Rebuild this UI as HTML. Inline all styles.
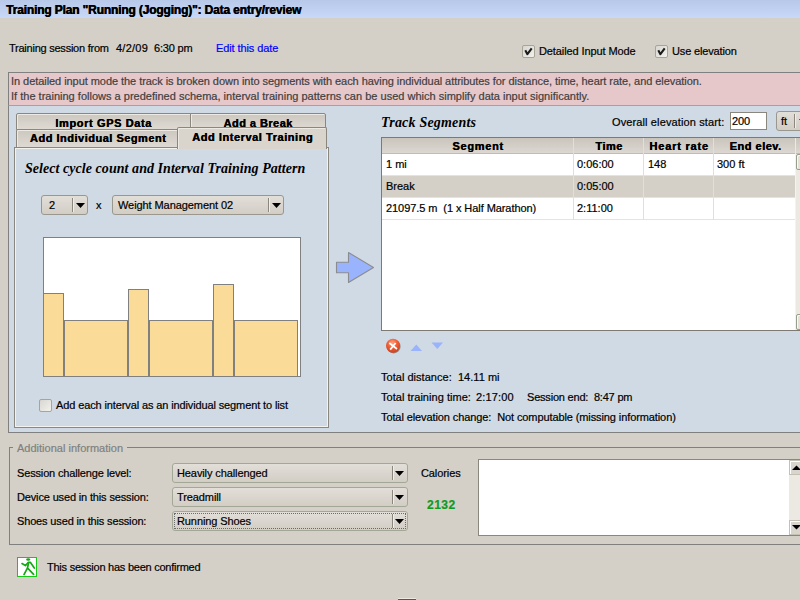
<!DOCTYPE html>
<html><head><meta charset="utf-8">
<style>
*{margin:0;padding:0;box-sizing:border-box}
html,body{width:800px;height:600px;overflow:hidden;background:#d4d0c8;font-family:"Liberation Sans",sans-serif;font-size:11px;color:#000}
.a{position:absolute}
.t{position:absolute;white-space:nowrap;line-height:13px;font-size:11px;letter-spacing:-0.1px;-webkit-text-stroke:0.2px currentColor}
.b{font-weight:bold}
#title{left:0;top:0;width:800px;height:18px;background:linear-gradient(#b8c8e8,#c8d8f8)}
#pink{left:8px;top:72px;width:800px;height:34px;border:1px solid #808080;border-bottom-color:#a2a2a2;border-right:none;background:#e6c8ca}
#blue{left:8px;top:106px;width:800px;height:327px;border-left:1px solid #808080;border-bottom:1px solid #808080;background:#d0dae4}
.cb{position:absolute;width:13px;height:13px;border:1px solid #a8a498;border-radius:2px;background:linear-gradient(135deg,#d8d6d0,#f2f1ec)}
.cb svg{position:absolute;left:0;top:0}

.tab{position:absolute;border:1px solid #8a877f;background:linear-gradient(#ccc8c0,#dedad3);box-shadow:inset 1px 1px 0 #eceae2}
.tab.sel{background:#d9d5cd}
.tl{position:absolute;white-space:nowrap;line-height:13px;font-size:11px;text-align:center;text-shadow:0.45px 0 0 #000}
#panel{left:14px;top:147px;width:315px;height:281px;border:1px solid #8a877f;background:#d0dae4;box-shadow:inset 1px 1px 0 #f4f2ec,inset -1px -1px 0 #f4f2ec}

.combo{position:absolute;border:1px solid #9a978e;border-radius:3px;background:linear-gradient(#e2ded8,#d2cec6)}
.combo .sep{position:absolute;top:2px;width:1px;height:14px;background:#8a877f;box-shadow:1px 0 0 #f0eee8}
.combo .arr{position:absolute}
.bar{position:absolute;border:1px solid #808080;background:#fadc98}

#tbl{left:381px;top:137px;width:430px;height:194px;border:1px solid #7e7a72;background:#fff;overflow:hidden}
#tbl .hdr{position:absolute;left:0;top:0;width:100%;height:16px;background:linear-gradient(#c9c5bd,#dcd8d1);border-bottom:1px solid #c0bcb4}
#tbl .hc{position:absolute;top:2px;height:13px;line-height:13px;text-align:center;font-weight:bold;white-space:nowrap;letter-spacing:0.5px;text-shadow:0.45px 0 0 #000}
#tbl .row{position:absolute;left:0;width:100%;height:22px;border-bottom:1px solid #e6e3dc}
#tbl .vl{position:absolute;top:0;width:1px;height:82px;background:#e2dfd8}
#tbl .c{position:absolute;line-height:13px;white-space:nowrap;letter-spacing:0px;-webkit-text-stroke:0.2px currentColor}
#tbl .sb{position:absolute;left:413px;top:16px;width:17px;height:176px;background:#ebe9e2;border-left:1px solid #f4f3ee}
#tbl .sbb{position:absolute;left:414px;width:17px;height:16px;border:1px solid #94a08c;border-radius:2px;background:linear-gradient(90deg,#e6e3dc,#d4d0c6);box-shadow:inset 1px 1px 0 #f8f8f4}

.combo.g{border-color:#a3a896}
.combo .focus{position:absolute;left:1px;top:1px;right:1px;bottom:1px;border:1px dotted #6a6a6a}
.sbtn{position:absolute;width:15px;height:15px;border:1px solid #c3c0b6;background:#d9d5cd;box-shadow:inset 1px 1px 0 #fff}
.sbtn svg{position:absolute;left:-1px;top:-1px}
</style></head><body>
<div id="title" class="a"></div>
<div class="t b" style="left:6px;top:3px;font-size:12px;line-height:14px;letter-spacing:-0.16px;text-shadow:0.4px 0 0 #000">Training Plan "Running (Jogging)": Data entry/review</div>

<div class="t" style="left:9px;top:42px;letter-spacing:-0.24px">Training session from</div>
<div class="t" style="left:116px;top:42px;letter-spacing:0.25px">4/2/09</div>
<div class="t" style="left:154px;top:42px;letter-spacing:-0.2px">6:30 pm</div>
<div class="t" style="left:216px;top:42px;color:#0000ff">Edit this date</div>

<div class="cb" style="left:522px;top:45px"><svg width="11" height="11" viewBox="0 0 11 11"><path d="M2.3 4.3L4.4 8.2L8.7 2.4" stroke="#1c1c1c" stroke-width="2.1" fill="none" stroke-linejoin="round"/></svg></div>
<div class="t" style="left:539px;top:45px;letter-spacing:-0.1px">Detailed Input Mode</div>
<div class="cb" style="left:655px;top:45px"><svg width="11" height="11" viewBox="0 0 11 11"><path d="M2.3 4.3L4.4 8.2L8.7 2.4" stroke="#1c1c1c" stroke-width="2.1" fill="none" stroke-linejoin="round"/></svg></div>
<div class="t" style="left:672px;top:45px;letter-spacing:-0.15px">Use elevation</div>

<div id="pink" class="a"></div>
<div class="t" style="left:11px;top:75px;color:#404040;letter-spacing:-0.055px">In detailed input mode the track is broken down into segments with each having individual attributes for distance, time, heart rate, and elevation.</div>
<div class="t" style="left:11px;top:90px;color:#404040;letter-spacing:0.01px">If the training follows a predefined schema, interval training patterns can be used which simplify data input significantly.</div>

<div id="blue" class="a"></div>


<!-- tabs -->
<div class="tab" style="left:16px;top:113px;width:175px;height:17px;border-radius:2px 0 0 0"></div>
<div class="tab" style="left:190px;top:113px;width:136px;height:17px;border-radius:0 2px 0 0"></div>
<div class="tl b" style="left:16px;top:117px;width:175px;letter-spacing:0.62px">Import GPS Data</div>
<div class="tl b" style="left:190px;top:117px;width:136px;letter-spacing:0.45px">Add a Break</div>
<div class="tab" style="left:16px;top:129px;width:162px;height:18px;border-bottom:none;border-radius:2px 0 0 0"></div>
<div class="tl b" style="left:17px;top:132px;width:162px;letter-spacing:0.5px">Add Individual Segment</div>
<div id="panel" class="a"></div>
<div class="tab sel" style="left:177px;top:127px;width:150px;height:22px;border-bottom:none;border-radius:2px 2px 0 0"></div>
<div class="tl b" style="left:178px;top:131px;width:149px;letter-spacing:0.55px">Add Interval Training</div>

<!-- left panel content -->
<div class="t" style="left:25px;top:161px;font-family:'Liberation Serif',serif;font-style:italic;font-weight:bold;font-size:14px;-webkit-text-stroke:0;line-height:16px;letter-spacing:0.05px">Select cycle count and Interval Training Pattern</div>
<div class="combo" style="left:41px;top:195px;width:47px;height:20px"><div class="sep" style="left:30px"></div><svg class="arr" style="left:34px;top:7px" width="9" height="5" viewBox="0 0 9 5"><path d="M0 0H9L4.5 5Z" fill="#000"/></svg></div>
<div class="t" style="left:49px;top:199px">2</div>
<div class="t" style="left:96px;top:199px">x</div>
<div class="combo" style="left:112px;top:195px;width:172px;height:20px"><div class="sep" style="left:155px"></div><svg class="arr" style="left:159px;top:7px" width="9" height="5" viewBox="0 0 9 5"><path d="M0 0H9L4.5 5Z" fill="#000"/></svg></div>
<div class="t" style="left:118px;top:199px;letter-spacing:-0.08px">Weight Management 02</div>
<div class="a" style="left:43px;top:237px;width:258px;height:140px;border:1px solid #808080;background:#fff"></div>
<div class="bar" style="left:43px;top:293px;width:21px;height:84px"></div>
<div class="bar" style="left:64px;top:320px;width:64px;height:57px"></div>
<div class="bar" style="left:128px;top:289px;width:21px;height:88px"></div>
<div class="bar" style="left:149px;top:320px;width:64px;height:57px"></div>
<div class="bar" style="left:213px;top:284px;width:21px;height:93px"></div>
<div class="bar" style="left:234px;top:320px;width:64px;height:57px"></div>
<div class="cb" style="left:39px;top:399px"></div>
<div class="t" style="left:56px;top:399px;letter-spacing:-0.12px">Add each interval as an individual segment to list</div>

<!-- arrow -->
<svg class="a" style="left:330px;top:245px" width="50" height="45" viewBox="330 245 50 45"><path d="M336.5 262.3H348.5V252.5L373.5 267.5L348.5 282.5V272.7H336.5Z" fill="#99b4fc" stroke="#8c8c90" stroke-width="1.1" stroke-linejoin="round"/></svg>
<!-- right -->
<div class="t" style="left:381px;top:115px;font-family:'Liberation Serif',serif;font-style:italic;font-weight:bold;font-size:14px;-webkit-text-stroke:0;line-height:16px;letter-spacing:0.2px">Track Segments</div>
<div class="t" style="left:612px;top:116px;letter-spacing:0.12px">Overall elevation start:</div>
<div class="a" style="left:730px;top:112px;width:37px;height:18px;border:1px solid #8a877f;background:#fff"></div>
<div class="t" style="left:732px;top:115px">200</div>
<div class="combo" style="left:776px;top:111px;width:40px;height:20px"><div class="sep" style="left:17px"></div><svg class="arr" style="left:22px;top:7px" width="9" height="5" viewBox="0 0 9 5"><path d="M0 0H9L4.5 5Z" fill="#000"/></svg></div>
<div class="t" style="left:781px;top:115px">ft</div>
<div id="tbl" class="a">
 <div class="hdr"></div>
 <div class="hc" style="left:0;width:192px;letter-spacing:0.7px">Segment</div>
 <div class="hc" style="left:192px;width:70px">Time</div>
 <div class="hc" style="left:262px;width:70px;letter-spacing:0.8px">Heart rate</div>
 <div class="hc" style="left:332px;width:83px">End elev.</div>
 <div class="row" style="top:16px;background:#fff"></div>
 <div class="row" style="top:38px;background:#d4d0c8"></div>
 <div class="row" style="top:60px;background:#fff"></div>
 <div class="vl" style="left:191px"></div>
 <div class="vl" style="left:261px"></div>
 <div class="vl" style="left:331px"></div>
 <div class="vl" style="left:413px;height:16px;background:#ece9e2"></div>
 <div class="c" style="left:4px;top:20px">1 mi</div>
 <div class="c" style="left:195px;top:20px">0:06:00</div>
 <div class="c" style="left:266px;top:20px">148</div>
 <div class="c" style="left:335px;top:20px">300 ft</div>
 <div class="c" style="left:4px;top:42px">Break</div>
 <div class="c" style="left:195px;top:42px">0:05:00</div>
 <div class="c" style="left:4px;top:64px;letter-spacing:-0.07px">21097.5 m&nbsp; (1 x Half Marathon)</div>
 <div class="c" style="left:195px;top:64px">2:11:00</div>
 <div class="sb"></div>
 <div class="sbb" style="top:16px"></div>
 <div class="sbb" style="top:176px"></div>
</div>
<!-- icons -->
<svg class="a" style="left:385px;top:338px" width="17" height="17" viewBox="0 0 17 17">
 <defs><radialGradient id="rg" cx="0.45" cy="0.3" r="0.75"><stop offset="0" stop-color="#ffa080"/><stop offset="0.45" stop-color="#f06038"/><stop offset="1" stop-color="#c83c18"/></radialGradient></defs>
 <circle cx="8.6" cy="8.4" r="7" fill="#5a4a44" opacity="0.55"/>
 <circle cx="8" cy="7.8" r="7" fill="url(#rg)"/>
 <path d="M4.3 5L12 11M10.6 5L5.2 11.6" stroke="#fff" stroke-width="1.7"/>
</svg>
<svg class="a" style="left:410px;top:344px" width="13" height="8" viewBox="0 0 13 8"><path d="M0.5 7L6.3 0.5L12 7Z" fill="#99b4fc"/></svg>
<svg class="a" style="left:431px;top:342px" width="13" height="8" viewBox="0 0 13 8"><path d="M0.5 0.5H12L6.3 7Z" fill="#99b4fc"/></svg>
<div class="t" style="left:381px;top:371px;letter-spacing:0.03px">Total distance:&nbsp; 14.11 mi</div>
<div class="t" style="left:381px;top:391px;letter-spacing:0.03px">Total training time:</div>
<div class="t" style="left:476px;top:391px;letter-spacing:0.15px">2:17:00</div>
<div class="t" style="left:527px;top:391px;letter-spacing:-0.2px">Session end:&nbsp; 8:47 pm</div>
<div class="t" style="left:381px;top:411px;letter-spacing:-0.1px">Total elevation change:&nbsp; Not computable (missing information)</div>

<!-- bottom group -->
<div class="a" style="left:9px;top:447px;width:800px;height:98px;border:1px solid #808080;border-right:none"></div>
<div class="t" style="left:13px;top:442px;padding:0 4px;background:#d4d0c8;color:#808080;letter-spacing:0.01px">Additional information</div>
<div class="t" style="left:17px;top:467px;letter-spacing:-0.15px">Session challenge level:</div>
<div class="t" style="left:17px;top:491px;letter-spacing:-0.15px">Device used in this session:</div>
<div class="t" style="left:17px;top:515px;letter-spacing:-0.15px">Shoes used in this session:</div>
<div class="combo g" style="left:172px;top:463px;width:236px;height:20px"><div class="sep" style="left:219px"></div><svg class="arr" style="left:222px;top:7px" width="9" height="5" viewBox="0 0 9 5"><path d="M0 0H9L4.5 5Z" fill="#000"/></svg></div>
<div class="t" style="left:177px;top:467px">Heavily challenged</div>
<div class="combo g" style="left:172px;top:487px;width:236px;height:20px"><div class="sep" style="left:219px"></div><svg class="arr" style="left:222px;top:7px" width="9" height="5" viewBox="0 0 9 5"><path d="M0 0H9L4.5 5Z" fill="#000"/></svg></div>
<div class="t" style="left:177px;top:491px">Treadmill</div>
<div class="combo g" style="left:172px;top:511px;width:236px;height:20px"><div class="sep" style="left:219px"></div><svg class="arr" style="left:222px;top:7px" width="9" height="5" viewBox="0 0 9 5"><path d="M0 0H9L4.5 5Z" fill="#000"/></svg><div class="focus"></div></div>
<div class="t" style="left:177px;top:515px">Running Shoes</div>
<div class="t" style="left:421px;top:467px">Calories</div>
<div class="t b" style="left:427px;top:498px;font-size:12px;line-height:14px;color:#109a20;letter-spacing:0.5px">2132</div>
<div class="a" style="left:478px;top:459px;width:330px;height:77px;border:1px solid #8a877f;background:#fff"></div>
<div class="a" style="left:789px;top:460px;width:15px;height:75px;background:#ece9e2"></div>
<div class="sbtn" style="left:789px;top:460px"><svg width="15" height="15" viewBox="0 0 15 15"><path d="M3 10H12L7.5 5.5Z" fill="#000"/></svg></div>
<div class="sbtn" style="left:789px;top:520px"><svg width="15" height="15" viewBox="0 0 15 15"><path d="M3 5H12L7.5 9.5Z" fill="#000"/></svg></div>
<!-- confirm -->
<svg class="a" style="left:17px;top:557px" width="20" height="20" viewBox="0 0 20 20">
 <rect x="0.5" y="0.5" width="19" height="19" fill="#fff" stroke="#18c818" stroke-width="1"/>
 <ellipse cx="11.2" cy="2.5" rx="2" ry="1.2" fill="#14a814"/>
 <path d="M5 6.6L8.4 8.6L11.4 5.3H13.3L17.3 11" stroke="#14a814" stroke-width="1.7" fill="none" stroke-linecap="round" stroke-linejoin="round"/>
 <path d="M11.6 5.8L10.4 11.2L7 17.6M10.6 11.2L16.6 17.3" stroke="#14a814" stroke-width="1.7" fill="none" stroke-linecap="round" stroke-linejoin="round"/>
</svg>
<div class="t" style="left:47px;top:561px;letter-spacing:-0.24px">This session has been confirmed</div>
<div class="a" style="left:398px;top:598px;width:18px;height:2px;border-top:1px solid #ece9e2;background:#555"></div>
</body></html>
